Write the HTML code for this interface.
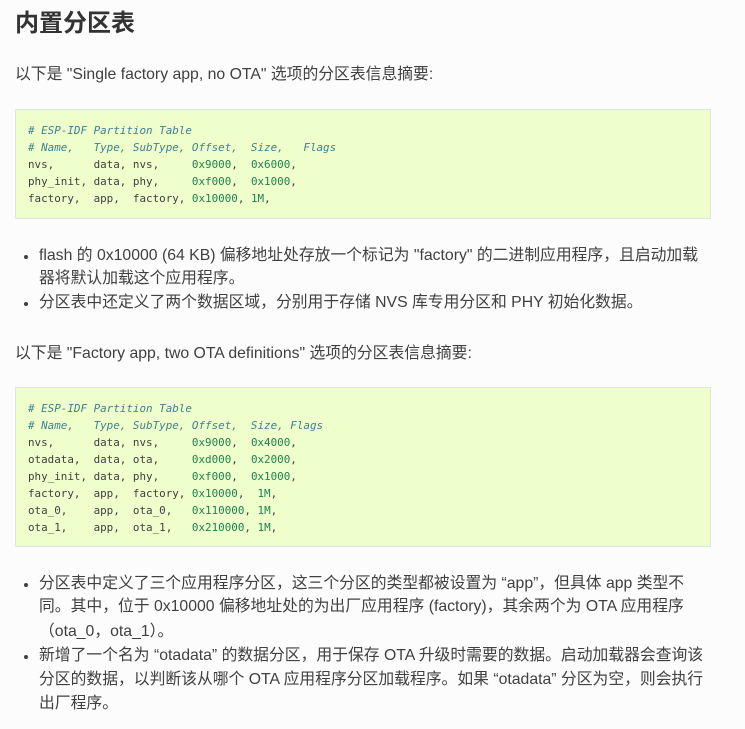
<!DOCTYPE html>
<html><head><meta charset="utf-8"><style>
body{margin:0;width:745px;height:729px;background:#fcfcfc;position:relative;overflow:hidden;font-family:"Liberation Sans","Noto Sans CJK SC",sans-serif;color:#404040}
.t{position:absolute;left:15px;white-space:nowrap;font-size:15.8px;line-height:24px}
.b{left:39px}
.dot{position:absolute;left:24px;width:4px;height:4px;border-radius:50%;background:#404040}
h1{position:absolute;left:15px;top:8px;margin:0;font-size:24px;line-height:32px;font-weight:bold;color:#333;font-family:"Liberation Sans","Noto Sans CJK SC",sans-serif}
.code{position:absolute;left:15px;width:696px;background:#eeffcc;border:1px solid #e1e4e5;box-sizing:border-box}
.c{position:absolute;left:28px;font-family:"DejaVu Sans Mono","Liberation Mono",monospace;font-size:10.9px;line-height:17px;white-space:pre;color:#404040}
.cm{color:#408090;font-style:italic}
.n{color:#208050}
</style></head><body>
<h1>内置分区表</h1>
<div class="t" style="top:63px">以下是 "Single factory app, no OTA" 选项的分区表信息摘要:</div>
<div class="code" style="top:109px;height:110px"></div>
<div class="c" style="top:122px"><span class="cm"># ESP-IDF Partition Table
# Name,   Type, SubType, Offset,  Size,   Flags</span>
nvs,      data, nvs,     <span class="n">0x9000</span>,  <span class="n">0x6000</span>,
phy_init, data, phy,     <span class="n">0xf000</span>,  <span class="n">0x1000</span>,
factory,  app,  factory, <span class="n">0x10000</span>, <span class="n">1M</span>,</div>
<div class="dot" style="top:255px"></div>
<div class="t b" style="top:244px">flash 的 0x10000 (64 KB) 偏移地址处存放一个标记为 "factory" 的二进制应用程序，且启动加载</div>
<div class="t b" style="top:267px">器将默认加载这个应用程序。</div>
<div class="dot" style="top:302px"></div>
<div class="t b" style="top:291px">分区表中还定义了两个数据区域，分别用于存储 NVS 库专用分区和 PHY 初始化数据。</div>
<div class="t" style="top:342px">以下是 "Factory app, two OTA definitions" 选项的分区表信息摘要:</div>
<div class="code" style="top:387px;height:160px"></div>
<div class="c" style="top:400px"><span class="cm"># ESP-IDF Partition Table
# Name,   Type, SubType, Offset,  Size, Flags</span>
nvs,      data, nvs,     <span class="n">0x9000</span>,  <span class="n">0x4000</span>,
otadata,  data, ota,     <span class="n">0xd000</span>,  <span class="n">0x2000</span>,
phy_init, data, phy,     <span class="n">0xf000</span>,  <span class="n">0x1000</span>,
factory,  app,  factory, <span class="n">0x10000</span>,  <span class="n">1M</span>,
ota_0,    app,  ota_0,   <span class="n">0x110000</span>, <span class="n">1M</span>,
ota_1,    app,  ota_1,   <span class="n">0x210000</span>, <span class="n">1M</span>,</div>
<div class="dot" style="top:583px"></div>
<div class="t b" style="top:572px">分区表中定义了三个应用程序分区，这三个分区的类型都被设置为 “app”，但具体 app 类型不</div>
<div class="t b" style="top:595px">同。其中，位于 0x10000 偏移地址处的为出厂应用程序 (factory)，其余两个为 OTA 应用程序</div>
<div class="t b" style="top:620px">（ota_0，ota_1）。</div>
<div class="dot" style="top:655px"></div>
<div class="t b" style="top:644px">新增了一个名为 “otadata” 的数据分区，用于保存 OTA 升级时需要的数据。启动加载器会查询该</div>
<div class="t b" style="top:668px">分区的数据，以判断该从哪个 OTA 应用程序分区加载程序。如果 “otadata” 分区为空，则会执行</div>
<div class="t b" style="top:692px">出厂程序。</div>
</body></html>
